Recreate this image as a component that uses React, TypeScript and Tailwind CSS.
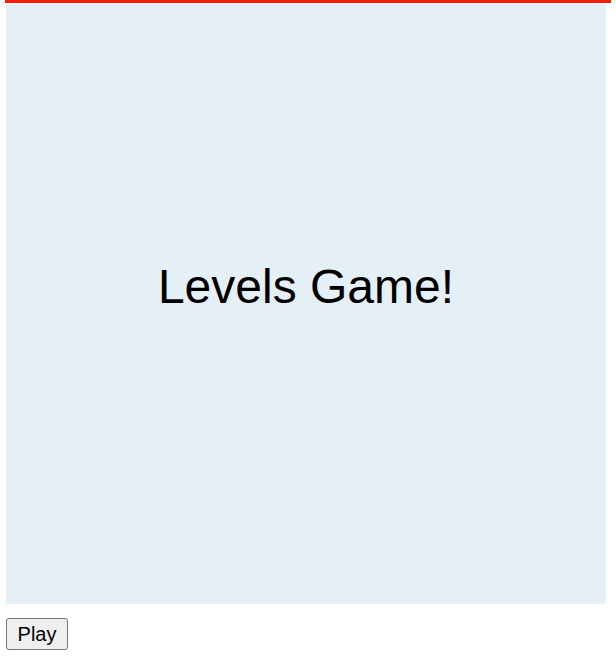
export default function App() {
  return (
    <div className="min-h-screen bg-white px-[6px] font-['Liberation_Sans',Arial,sans-serif]">
      {/* Red frame edge (cut off at top) */}
      <div className="ml-[-1px] h-[3px] w-[606px] bg-[#f81d06]" />
      <div className="mt-[1px] flex h-[600px] w-[600px] items-center justify-center bg-[#e5f0f6] pb-[34px]">
        <h1 className="text-[48px] leading-none text-black">Levels Game!</h1>
      </div>
      <button className="mt-[14px] flex h-[32px] w-[62px] items-center justify-center rounded-[3px] border border-[#767676] bg-[#efefef] text-[20px] text-black">
        Play
      </button>
    </div>
  );
}
